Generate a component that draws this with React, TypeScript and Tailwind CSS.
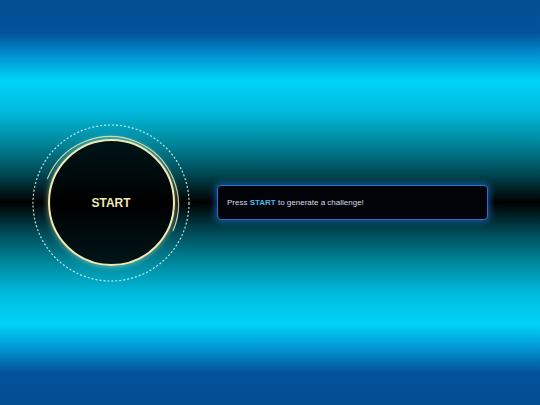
import React from "react";

// Decorative rings around the start button
function Rings() {
  return (
    <svg
      className="absolute inset-0 pointer-events-none"
      width="158"
      height="158"
      viewBox="0 0 158 158"
      fill="none"
    >
      <circle
        cx="79"
        cy="79"
        r="78"
        stroke="#d6f4f4"
        strokeOpacity="0.9"
        strokeWidth="1.2"
        strokeDasharray="2 2"
      />
      <path
        d="M15.5 54.6 A68 68 0 1 1 141.2 106.6"
        stroke="#ebe8bd"
        strokeOpacity="0.85"
        strokeWidth="1.2"
        strokeLinecap="round"
      />
    </svg>
  );
}

export default function App() {
  return (
    <div
      className="w-full h-screen flex items-center pl-[32px] gap-[27px] bg-[linear-gradient(to_bottom,#024e92_0%,#03529a_8%,#0196d2_14%,#00d4f8_20%,#00bde0_27%,#00899e_35%,#004752_43%,#000000_50%,#004752_57%,#00899e_65%,#00bde0_73%,#00d4f8_80%,#0196d2_86%,#03529a_92%,#024e92_100%)]"
      style={{ fontFamily: '"Liberation Sans", Arial, sans-serif' }}
    >
      {/* Start button with rings */}
      <div className="relative w-[158px] h-[158px] shrink-0 flex items-center justify-center">
        <Rings />
        <button
          type="button"
          className="w-[127px] h-[127px] rounded-full border-2 border-[#f3ebb2] bg-black/85 shadow-[0_0_6px_rgba(245,235,170,0.55)] flex items-center justify-center text-[12px] font-bold text-[#efe7b5]"
        >
          START
        </button>
      </div>

      {/* Message panel */}
      <div className="w-[271px] h-[35px] shrink-0 rounded-[4px] border border-[#2f6fd0] bg-[#000307] shadow-[0_0_6px_2px_rgba(40,120,230,0.55)] flex items-center px-[9px]">
        <p className="text-[8px] text-[#d5dce6] leading-none">
          Press <span className="font-bold text-[#4eb6ee]">START</span> to generate a challenge!
        </p>
      </div>
    </div>
  );
}
